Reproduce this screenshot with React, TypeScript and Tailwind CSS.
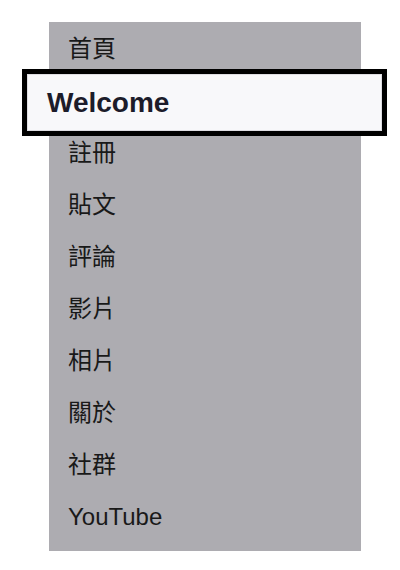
import React from "react";

const items = ["首頁", "Welcome", "註冊", "貼文", "評論", "影片", "相片", "關於", "社群", "YouTube"];

export default function App() {
  return (
    <div
      className="w-[400px] h-[570px] bg-white pt-[22px] pl-[49px]"
      style={{ fontFamily: '"Liberation Sans", "Noto Sans CJK TC", sans-serif' }}
    >
      <div className="w-[312px] bg-[#adacb1] pt-[1px] pb-[8px]">
        {items.map((t) =>
          t === "Welcome" ? (
            <div key={t} className="relative h-[52px]">
              <div className="absolute left-[-27px] right-[-26px] top-[-6px] bottom-[-9px] border-[5px] border-black bg-[#f8f8fa] flex items-center pl-[20px]">
                <div className="absolute inset-0 border border-[#dedde2]" />
                <span className="relative text-[28px] font-bold text-[#1c1c2a] leading-none">Welcome</span>
              </div>
            </div>
          ) : (
            <div key={t} className="h-[52px] flex items-center pl-[19px] text-[24px] text-[#191919] leading-none">
              {t}
            </div>
          )
        )}
      </div>
    </div>
  );
}
